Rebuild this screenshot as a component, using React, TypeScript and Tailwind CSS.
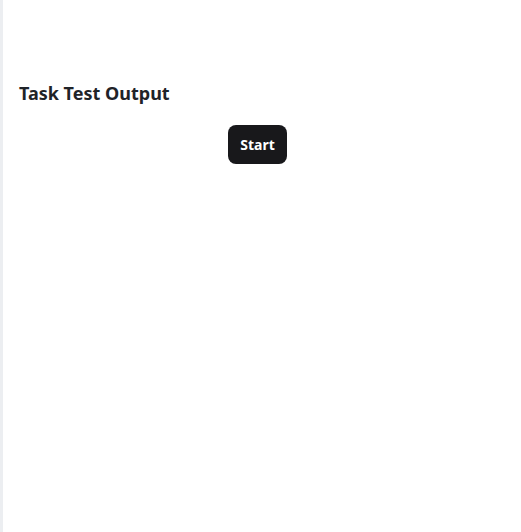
export default function App() {
  return (
    <div className="flex min-h-screen bg-white" style={{ fontFamily: '"Noto Sans", "Open Sans", sans-serif' }}>
      <div className="w-[3px] shrink-0 bg-[#eceef1]" />
      <div className="flex-1 px-4 pt-[79px]">
        <h2 className="text-[18px] font-bold leading-[28px] text-[#1f2328]">Task Test Output</h2>
        <div className="mt-[18px] flex justify-center pr-[9px]">
          <button
            type="button"
            className="h-[39px] w-[59px] rounded-lg bg-[#18181b] text-[14px] font-bold text-white"
          >
            Start
          </button>
        </div>
      </div>
    </div>
  );
}
